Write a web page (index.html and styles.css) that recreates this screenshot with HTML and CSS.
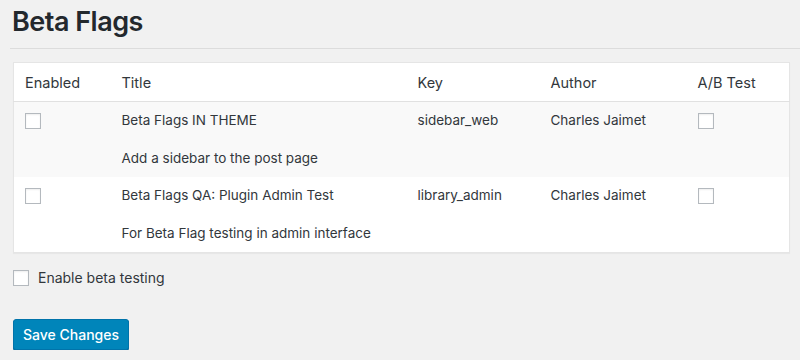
FILE: index.html
```html
<!DOCTYPE html>
<html lang="en">
<head>
    <meta charset="UTF-8">
    <meta name="viewport" content="width=device-width, initial-scale=1.0">
    <title>Beta Flags</title>
    <link rel="stylesheet" href="styles.css">
</head>
<body>
    <div class="wrap">
        <h1>Beta Flags</h1>
        <hr class="divider">
        <form id="flagsForm">
            <table class="flags">
                <colgroup>
                    <col class="col-enabled">
                    <col class="col-title">
                    <col class="col-key">
                    <col class="col-author">
                    <col class="col-ab">
                </colgroup>
                <thead>
                    <tr>
                        <th class="cell-enabled">Enabled</th>
                        <th>Title</th>
                        <th>Key</th>
                        <th>Author</th>
                        <th>A/B Test</th>
                    </tr>
                </thead>
                <tbody>
                    <tr class="alt">
                        <td class="cell-enabled"><input type="checkbox" name="enabled[sidebar_web]"></td>
                        <td>
                            <div class="flag-title">Beta Flags IN THEME</div>
                            <div class="flag-desc">Add a sidebar to the post page</div>
                        </td>
                        <td>sidebar_web</td>
                        <td>Charles Jaimet</td>
                        <td><input type="checkbox" name="ab[sidebar_web]"></td>
                    </tr>
                    <tr>
                        <td class="cell-enabled"><input type="checkbox" name="enabled[library_admin]"></td>
                        <td>
                            <div class="flag-title">Beta Flags QA: Plugin Admin Test</div>
                            <div class="flag-desc">For Beta Flag testing in admin interface</div>
                        </td>
                        <td>library_admin</td>
                        <td>Charles Jaimet</td>
                        <td><input type="checkbox" name="ab[library_admin]"></td>
                    </tr>
                </tbody>
            </table>
            <label class="beta-toggle">
                <input type="checkbox" name="beta_testing">
                <span>Enable beta testing</span>
            </label>
            <button type="submit" class="button-primary">Save Changes</button>
        </form>
    </div>
</body>
</html>
```

FILE: styles.css
```css
html, body {
    background: #f1f1f1;
}
body {
    margin: 0;
    font-family: Inter, "Open Sans", sans-serif;
    font-size: 13.5px;
    color: #32373c;
}
.wrap {
    padding: 0 11px 0 13px;
}
h1 {
    margin: 0;
    padding: 5px 0 0 0;
    margin-left: -1px;
    font-size: 27px;
    font-weight: 600;
    line-height: 34px;
    color: #23282d;
    letter-spacing: -0.5px;
}
.divider {
    border: 0;
    border-top: 1px solid #dcdcdc;
    margin: 9px -11px 13px -3px;
}
.flags {
    width: 776px;
    table-layout: fixed;
    border-collapse: collapse;
    background: #fff;
    border: 1px solid #e5e5e5;
    box-shadow: 0 1px 1px rgba(0, 0, 0, 0.04);
}
.col-enabled { width: 98px; }
.col-title { width: 296px; }
.col-key { width: 133px; }
.col-author { width: 147px; }
.col-ab { width: 102px; }
th {
    text-align: left;
    font-weight: 400;
    font-size: 14.5px;
    line-height: 20px;
    padding: 10px 10px 8px;
    color: #32373c;
    border-bottom: 1px solid #e1e1e1;
}
td {
    vertical-align: top;
    padding: 8px 10px 9px;
    line-height: 20px;
}
.cell-enabled {
    padding-left: 11px;
}
tr.alt td {
    background: #f9f9f9;
}
.flag-desc {
    margin-top: 18px;
}
input[type="checkbox"] {
    appearance: none;
    -webkit-appearance: none;
    display: block;
    width: 16px;
    height: 16px;
    margin: 3px 0 0 0;
    border: 1px solid #b4b9be;
    background: #fff;
    box-shadow: inset 0 1px 2px rgba(0, 0, 0, 0.07);
    box-sizing: border-box;
}
.beta-toggle {
    display: flex;
    align-items: center;
    gap: 9px;
    margin-top: 16px;
    font-size: 14px;
}
.beta-toggle input[type="checkbox"] {
    margin: 0;
}
.button-primary {
    display: block;
    margin-top: 33px;
    width: 116px;
    height: 31px;
    padding: 0;
    background: #0085ba;
    border: 1px solid #0073aa;
    border-radius: 3px;
    box-shadow: 0 1px 0 #006799;
    color: #fff;
    font-family: Inter, "Open Sans", sans-serif;
    font-size: 14px;
    font-weight: 500;
    cursor: pointer;
}
```
